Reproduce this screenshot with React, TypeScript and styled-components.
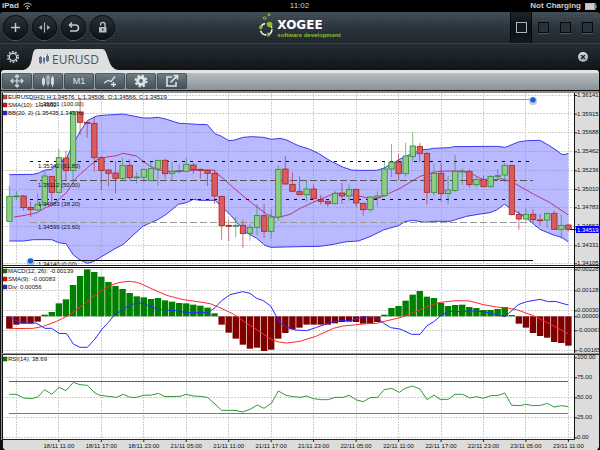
import React from "react";
import styled, { createGlobalStyle, css } from "styled-components";

const GlobalStyle = createGlobalStyle`
  * { box-sizing: border-box; }
  html, body { margin: 0; background: #000; }
  body { font-family: "Liberation Sans", Arial, sans-serif; }
  button { font: inherit; color: inherit; border: 0; padding: 0; margin: 0; background: none; cursor: pointer; }
  svg { display: block; }
`;

const Screen = styled.main`
  width: 100%;
  background: #000;
`;

const StatusBar = styled.div`
  display: grid;
  grid-template-columns: 1fr auto 1fr;
  align-items: center;
  height: 12px;
  padding: 0 3px 0 2px;
  background: #000;
  color: #cfcfcf;
  font-size: 8px;
  line-height: 12px;
  font-weight: 700;
`;

const StatusGroup = styled.div<{ $end?: boolean }>`
  display: flex;
  align-items: center;
  gap: 4px;
  justify-content: ${(p) => (p.$end ? "flex-end" : "flex-start")};
`;

const Clock = styled.time`
  font-weight: 400;
`;

const weave = css`
  background-image:
    repeating-linear-gradient(90deg, rgba(255, 255, 255, 0.02) 0 1px, transparent 1px 3px),
    repeating-linear-gradient(0deg, rgba(0, 0, 0, 0.06) 0 1px, transparent 1px 3px),
    var(--shade);
`;

const Header = styled.header`
  --shade: linear-gradient(#42505a, #2a343c 50%, #20282f);
  ${weave}
  display: grid;
  grid-template-columns: 1fr auto 1fr;
  height: 31px;
  border-radius: 3px 3px 0 0;
`;

const Actions = styled.nav`
  display: flex;
  align-items: center;
  gap: 4px;
  padding-left: 3px;
`;

const RoundButton = styled.button`
  display: grid;
  place-items: center;
  width: 25px;
  height: 25px;
  border-radius: 50%;
  background: linear-gradient(#2b343a, #0c1013);
  box-shadow: 0 0 0 1px #0d1215 inset, 0 1px 0 #4a565e;
`;

const Brand = styled.div`
  display: flex;
  align-items: flex-start;
  gap: 3px;
  padding-top: 1px;
`;

const BrandText = styled.div`
  padding-top: 5px;
`;

const BrandName = styled.div`
  font-family: "DejaVu Sans", sans-serif;
  font-size: 12px;
  line-height: 14px;
  font-weight: 700;
  color: #fff;
`;

const BrandLine = styled.div`
  font-size: 6px;
  line-height: 6px;
  font-weight: 700;
  color: #8fbf21;
`;

const Layouts = styled.nav`
  display: flex;
  justify-content: flex-end;
  padding-right: 2px;
`;

const LayoutButton = styled.button<{ $on?: boolean }>`
  display: grid;
  place-items: center;
  width: 22px;
  height: 31px;
  ${(p) =>
    p.$on &&
    css`
      background: linear-gradient(#1d252b, #0c1013 50%, #14191d);
      border: solid #07090b;
      border-width: 0 1px;
    `}
`;

const LayoutBox = styled.span<{ $on?: boolean }>`
  width: 11px;
  height: 11px;
  border: ${(p) => (p.$on ? "1px solid #a9b7bf" : "1px solid #07090b")};
  background: ${(p) => (p.$on ? "#12171a" : "#28323a")};
  box-shadow: ${(p) => (p.$on ? "none" : "0 1px 0 #4d5860")};
`;

const TabRow = styled.div`
  --shade: linear-gradient(#262e34, #0f1316);
  ${weave}
  display: flex;
  align-items: flex-end;
  height: 27px;
  border-top: 1px solid #36424a;
`;

const SettingsButton = styled.button`
  align-self: center;
  margin-left: 6px;
  width: 14px;
  height: 14px;
`;

const Tab = styled.button`
  display: flex;
  height: 21px;
  margin-left: 3px;
`;

const TabFace = styled.span`
  display: flex;
  align-items: center;
  gap: 3px;
  height: 21px;
  padding: 0 3px 0 2px;
  background: #dedfe0;
  color: #4a545c;
  font-family: "Open Sans", sans-serif;
  font-size: 12px;
  line-height: 20px;
`;

const CloseButton = styled.button`
  display: grid;
  place-items: center;
  align-self: center;
  margin: 0 12px 0 auto;
  width: 10px;
  height: 10px;
  border-radius: 50%;
  background: linear-gradient(#e2e6ea, #9aa5ae);
`;

const Toolbar = styled.div`
  display: flex;
  gap: 1px;
  height: 20px;
  margin: 0 1px;
  padding: 0 1px 1px;
  border-top: 3px solid #e4e5e6;
  border-radius: 3px 3px 0 0;
  background: linear-gradient(#babfc2, #86919a);
`;

const Tool = styled.button`
  display: grid;
  place-items: center;
  flex: 0 0 30px;
  height: 16px;
  border: 1px solid #414d55;
  border-top-color: #55616a;
  border-radius: 2px;
  background: linear-gradient(#6f7c84, #465159);
  color: #dfe3e6;
  font-size: 9px;
  line-height: 14px;
`;

const ChartSvg = styled.svg`
  width: 100%;
  height: auto;
`;

const ChartText = styled.text<{ $light?: boolean }>`
  font-family: "Liberation Sans", Arial, sans-serif;
  font-size: 6px;
  fill: ${(p) => (p.$light ? "#fff" : "#111")};
`;

/* ---------- chart data: vertical samples are stored in thirds of a unit ---------- */

type Point = [number, number];
const t = (v: number) => v / 3;
const slotX = (i: number) => t(28 + i * 21.23);
const line = (pts: Point[]) => pts.map(([x, y]) => `${t(x).toFixed(2)},${t(y).toFixed(2)}`).join(" ");

const PLOT_LEFT = 3;
const PLOT_RIGHT = 574;

// direction, body top, body bottom, wick top, wick bottom
const candles: ["g" | "r", number, number, number, number][] = [
  ["g", 319, 394, 288, 394], ["g", 318, 320, 303, 330], ["r", 318, 353, 315, 362], ["r", 352, 359, 334, 381],
  ["g", 343, 360, 310, 365], ["g", 258, 343, 245, 347], ["r", 259, 307, 258, 333], ["g", 203, 307, 177, 308],
  ["r", 204, 242, 182, 270], ["g", 66, 241, 62, 270], ["r", 67, 97, 25, 135], ["r", 97, 100, 96, 143],
  ["r", 100, 203, 80, 245], ["r", 203, 242, 198, 300], ["r", 240, 250, 238, 289], ["r", 249, 265, 213, 311],
  ["g", 226, 265, 203, 270], ["r", 226, 263, 207, 270], ["g", 261, 263, 246, 280], ["g", 238, 262, 236, 277],
  ["g", 236, 272, 216, 272], ["g", 211, 237, 210, 287], ["r", 211, 251, 207, 266], ["g", 244, 250, 215, 269],
  ["g", 243, 245, 225, 250], ["g", 223, 244, 203, 245], ["r", 225, 239, 219, 251], ["r", 238, 241, 236, 266],
  ["r", 241, 250, 238, 288], ["r", 250, 318, 238, 342], ["r", 319, 407, 318, 449], ["r", 406, 409, 390, 453],
  ["g", 406, 409, 381, 441], ["r", 406, 431, 390, 473], ["g", 412, 430, 404, 452], ["g", 376, 412, 342, 435],
  ["r", 377, 424, 342, 444], ["g", 381, 424, 357, 447], ["g", 238, 381, 226, 392], ["r", 237, 282, 198, 284],
  ["r", 283, 304, 246, 304], ["r", 305, 314, 259, 314], ["g", 297, 314, 270, 335], ["r", 297, 326, 283, 331],
  ["r", 329, 334, 315, 343], ["r", 334, 341, 332, 350], ["g", 310, 341, 301, 343], ["r", 309, 318, 279, 342],
  ["g", 298, 318, 283, 333], ["r", 298, 339, 297, 351], ["r", 340, 359, 338, 377], ["g", 321, 359, 319, 367],
  ["g", 318, 322, 305, 350], ["g", 237, 317, 215, 321], ["g", 216, 237, 162, 262], ["r", 216, 251, 192, 270],
  ["g", 198, 251, 158, 260], ["g", 168, 200, 126, 215], ["r", 169, 191, 159, 216], ["r", 190, 307, 185, 344],
  ["g", 250, 307, 220, 315], ["r", 250, 311, 220, 334], ["g", 300, 311, 258, 343], ["g", 244, 301, 195, 305],
  ["g", 243, 246, 235, 285], ["r", 244, 284, 238, 292], ["g", 268, 284, 262, 291], ["r", 268, 290, 257, 292],
  ["g", 259, 290, 257, 293], ["g", 257, 260, 237, 273], ["g", 226, 255, 220, 277], ["r", 226, 374, 225, 377],
  ["r", 373, 387, 363, 419], ["g", 373, 387, 355, 395], ["r", 373, 389, 357, 400], ["r", 390, 392, 372, 407],
  ["g", 370, 390, 368, 413], ["r", 370, 418, 362, 419], ["g", 406, 418, 374, 447], ["r", 405, 418, 402, 424],
];

const upperBand: Point[] = [
  [28, 254], [100, 253], [118, 248], [135, 240], [155, 238], [176, 215], [200, 205], [215, 170], [240, 125],
  [262, 92], [290, 78], [320, 75], [345, 74], [368, 72], [400, 78], [430, 84], [450, 84], [475, 82], [500, 88],
  [537, 100], [560, 101], [590, 103], [622, 104], [645, 131], [665, 139], [686, 152], [700, 151], [730, 142],
  [755, 140], [790, 142], [815, 148], [840, 145], [860, 150], [880, 160], [900, 169], [925, 176], [955, 190],
  [990, 212], [1030, 232], [1055, 240], [1070, 241], [1130, 241], [1150, 235], [1175, 222], [1200, 207],
  [1220, 198], [1250, 185], [1262, 179], [1285, 178], [1300, 175], [1350, 173], [1360, 170], [1490, 169],
  [1516, 172], [1555, 156], [1580, 152], [1620, 151], [1645, 165], [1665, 178], [1685, 193], [1694, 194], [1705, 190],
];

const lowerBand: Point[] = [
  [28, 453], [70, 453], [100, 449], [155, 449], [176, 458], [198, 461], [220, 495], [240, 510], [262, 520],
  [280, 515], [305, 500], [345, 476], [370, 463], [400, 435], [430, 408], [450, 399], [475, 388], [500, 372],
  [535, 343], [560, 338], [580, 328], [600, 331], [645, 331], [670, 355], [690, 373], [710, 397], [740, 428],
  [770, 445], [795, 466], [812, 472], [900, 470], [960, 469], [1000, 463], [1040, 455], [1075, 453], [1110, 440],
  [1150, 420], [1195, 407], [1215, 395], [1238, 391], [1275, 397], [1300, 394], [1350, 394], [1400, 379],
  [1440, 372], [1470, 368], [1490, 360], [1513, 343], [1550, 366], [1580, 385], [1620, 418], [1660, 435],
  [1685, 442], [1705, 456],
];

const priceAverage: Point[] = [
  [42, 381], [75, 376], [112, 368], [132, 355], [155, 346], [180, 325], [200, 307], [230, 262], [260, 235],
  [290, 210], [320, 201], [350, 197], [368, 190], [410, 198], [430, 215], [450, 228], [470, 238], [500, 245],
  [540, 243], [560, 241], [640, 240], [680, 275], [720, 310], [760, 343], [800, 372], [820, 381], [840, 381],
  [870, 373], [900, 355], [950, 332], [985, 318], [1005, 309], [1070, 317], [1110, 325], [1135, 325], [1165, 311],
  [1200, 295], [1260, 259], [1300, 247], [1320, 244], [1360, 243], [1390, 244], [1420, 254], [1455, 272],
  [1475, 270], [1505, 266], [1540, 278], [1600, 312], [1650, 338], [1705, 375],
];

const macdBars = [
  194, 182, 179, 179, 173, 152, 144, 118, 106, 63, 36, 16, 24, 38, 54, 66, 75, 87, 97, 100, 105, 102, 109, 113,
  117, 118, 122, 125, 131, 148, 182, 206, 224, 242, 254, 251, 261, 257, 224, 207, 196, 191, 182, 182, 182, 182,
  178, 174, 173, 174, 179, 178, 174, 152, 132, 126, 110, 92, 81, 98, 102, 117, 126, 123, 122, 129, 132, 138,
  138, 135, 129, 153, 179, 191, 207, 216, 221, 234, 237, 245,
];
const MACD_ZERO = 157;

const macdAverage: Point[] = [
  [28, 194], [100, 193], [130, 187], [170, 172], [210, 152], [260, 114], [300, 82], [335, 63], [360, 55], [385, 52],
  [405, 54], [420, 58], [450, 72], [500, 94], [550, 107], [600, 114], [630, 119], [660, 131], [700, 150], [740, 178],
  [775, 200], [810, 224], [835, 234], [860, 237], [900, 232], [950, 216], [1000, 193], [1030, 186], [1100, 179],
  [1130, 178], [1170, 168], [1200, 161], [1240, 146], [1280, 128], [1320, 115], [1370, 110], [1410, 111],
  [1450, 122], [1490, 129], [1520, 132], [1550, 137], [1600, 155], [1650, 180], [1704, 209],
];

const macdDivergence: Point[] = [
  [28, 158], [45, 169], [65, 177], [108, 177], [135, 193], [155, 193], [177, 208], [200, 209], [220, 240],
  [240, 250], [262, 250], [285, 225], [305, 197], [325, 175], [345, 151], [368, 138], [388, 124], [410, 117],
  [430, 118], [450, 127], [475, 136], [530, 140], [560, 146], [600, 146], [625, 146], [645, 131], [665, 110],
  [690, 92], [728, 83], [750, 88], [770, 103], [790, 110], [812, 126], [825, 150], [840, 175], [860, 189],
  [885, 198], [920, 200], [950, 190], [990, 176], [1030, 169], [1050, 171], [1090, 158], [1130, 162], [1150, 177],
  [1172, 191], [1200, 195], [1235, 211], [1260, 211], [1280, 186], [1300, 174], [1325, 153], [1345, 142],
  [1390, 143], [1410, 140], [1450, 143], [1485, 151], [1515, 158], [1535, 140], [1555, 122], [1580, 113],
  [1620, 106], [1645, 113], [1665, 112], [1705, 123],
];

const rsi: Point[] = [
  [28, 391], [50, 391], [70, 402], [95, 404], [113, 399], [134, 377], [155, 391], [177, 370], [198, 380],
  [220, 355], [240, 362], [262, 364], [285, 387], [300, 394], [350, 400], [370, 391], [390, 400], [410, 400],
  [430, 394], [455, 393], [475, 388], [495, 398], [540, 397], [558, 391], [580, 396], [600, 397], [622, 400],
  [645, 420], [665, 439], [705, 439], [728, 444], [750, 436], [772, 423], [792, 433], [815, 417], [835, 381],
  [858, 394], [880, 398], [900, 400], [920, 396], [940, 404], [965, 407], [985, 407], [1005, 400], [1030, 400],
  [1047, 394], [1070, 408], [1090, 413], [1110, 401], [1133, 400], [1152, 377], [1175, 373], [1198, 385],
  [1215, 373], [1238, 366], [1260, 375], [1281, 407], [1302, 393], [1320, 406], [1345, 406], [1365, 391],
  [1388, 391], [1410, 402], [1430, 398], [1450, 403], [1472, 395], [1495, 394], [1514, 387], [1535, 424],
  [1560, 425], [1577, 421], [1600, 425], [1622, 424], [1642, 418], [1662, 429], [1685, 425], [1705, 428],
];

type Level = [number, string];
const priceLevels: Level[] = [
  [15, "1.36141"], [71, "1.35915"], [127, "1.35688"], [184, "1.35462"], [241, "1.35236"],
  [297, "1.35010"], [352, "1.34783"], [409, "1.34557"], [466, "1.34331"], [520, "1.34105"],
];
const macdLevels: Level[] = [
  [16, "0.00226"], [79, "0.00128"], [139, "0.00030"], [157, "0.00000"], [199, "-0.00067"], [259, "-0.00165"],
];
const rsiLevels: Level[] = [[280, "100.00"], [340, "75.00"], [400, "50.00"], [460, "25.00"], [520, "0.00"]];

const fibs = [
  { y: 28, label: "1.35801 (100.00)", stroke: "#999", dash: undefined, text: 48 },
  { y: 214, label: "1.35342 (61.80)", stroke: "#000", dash: "3 5", text: 233 },
  { y: 271, label: "1.35112 (50.00)", stroke: "#555", dash: "7 3", text: 290 },
  { y: 328, label: "1.34883 (38.20)", stroke: "#000", dash: "3 5", text: 347 },
  { y: 398, label: "1.34599 (23.60)", stroke: "#999", dash: "7 3", text: 417 },
  { y: 511, label: "1.34140 (0.00)", stroke: "#000", dash: undefined, text: 527 },
];

const times = [
  "18/11 11:00", "18/11 17:00", "18/11 23:00", "21/11 05:00", "21/11 11:00", "21/11 17:00", "21/11 23:00",
  "22/11 05:00", "22/11 11:00", "22/11 17:00", "22/11 23:00", "23/11 05:00", "23/11 11:00",
];

/* ---------- chart parts ---------- */

function Frame({ top, height }: { top: number; height: number }) {
  return (
    <g shapeRendering="crispEdges">
      <rect x="0" y={top} width="600" height={height} fill="#111" />
      <rect x="1" y={top} width="1" height={height} fill="#8d959b" />
      <rect x={PLOT_LEFT} y={top} width={PLOT_RIGHT - PLOT_LEFT} height={height} fill="#fff" />
      <rect x={PLOT_RIGHT + 1} y={top} width="24" height={height} fill="#dcdcdc" />
    </g>
  );
}

function Grid({ levels, top, bottom }: { levels: Level[]; top: number; bottom: number }) {
  return (
    <g stroke="#cfcfcf" strokeWidth="1" strokeDasharray="2 1" shapeRendering="crispEdges">
      {levels.map(([v]) => (
        <line key={v} x1={PLOT_LEFT} x2={PLOT_RIGHT} y1={t(v)} y2={t(v)} />
      ))}
      {Array.from({ length: 14 }, (_, k) => slotX(1 + k * 6)).map((x) => (
        <line key={x} x1={x} x2={x} y1={top} y2={bottom} />
      ))}
    </g>
  );
}

function Scale({ levels }: { levels: Level[] }) {
  return (
    <>
      {levels.map(([v, label]) => (
        <React.Fragment key={label}>
          <rect x="575" y={t(v)} width="2" height="1" fill="#222" />
          <ChartText x="577" y={t(v) + 2}>{label}</ChartText>
        </React.Fragment>
      ))}
    </>
  );
}

function Key({ rows, top }: { rows: [string, string][]; top: number }) {
  return (
    <>
      {rows.map(([color, label], i) => (
        <React.Fragment key={label}>
          <rect x="3" y={top + i * 8 - 4} width="4" height="4" fill={color} stroke="#222" strokeWidth="0.4" />
          <ChartText x="8" y={top + i * 8}>{label}</ChartText>
        </React.Fragment>
      ))}
    </>
  );
}

function Handle({ x, y }: { x: number; y: number }) {
  return (
    <g>
      <circle cx={x} cy={y + 1} r="4" fill="#777" opacity="0.45" />
      <circle cx={x} cy={y} r="3.4" fill="#d9e4f2" />
      <circle cx={x} cy={y} r="2.8" fill="#1265d8" />
    </g>
  );
}

function PriceChart() {
  const area = `${line(upperBand)} ${line([...lowerBand].reverse())}`;
  return (
    <ChartSvg viewBox="0 0 600 176" role="img" aria-label="EURUSD hourly candlestick chart">
      <Frame top={0} height={176} />
      <rect x="1" y="0" width="598" height="1" fill="#111" />
      <rect x="2" y="1" width="597" height="2" fill="#8c8c8c" />
      <Grid levels={priceLevels} top={3} bottom={174} />
      <polygon points={area} fill="#8080ff" fillOpacity="0.55" />
      <polyline points={line(upperBand)} fill="none" stroke="#3a3aee" />
      <polyline points={line(lowerBand)} fill="none" stroke="#3a3aee" />
      <polyline points={line(priceAverage)} fill="none" stroke="#b8387f" />
      <g shapeRendering="crispEdges">
        {fibs.map((f) => (
          <line key={f.y} x1="30" x2="533" y1={t(f.y)} y2={t(f.y)} stroke={f.stroke} strokeDasharray={f.dash} />
        ))}
      </g>
      {candles.map(([dir, top, bottom, high, low], i) => {
        const x = slotX(i);
        const edge = dir === "g" ? "#2c8c35" : "#a52520";
        return (
          <g key={i} stroke={edge}>
            <line x1={x} x2={x} y1={t(high)} y2={t(low)} strokeOpacity="0.6" />
            <rect
              x={x - 2.6}
              y={t(top)}
              width="5.4"
              height={Math.max(t(bottom - top), 0.5)}
              fill={dir === "g" ? "#90cc84" : "#d85c5c"}
              strokeWidth="0.8"
            />
          </g>
        );
      })}
      {fibs.map((f) => (
        <ChartText key={f.y} x="38" y={t(f.text)}>{f.label}</ChartText>
      ))}
      <Key
        top={9}
        rows={[
          ["#b5524a", "EURUSD(H1) H:1.34576, L:1.34506, O:1.34566, C:1.34519"],
          ["#f00", "SMA(10): 1.34692"],
          ["#22f", "BB(20, 2) (1.35435,1.34376)"],
        ]}
      />
      <Handle x={30.5} y={171} />
      <Handle x={533} y={10} />
      <Scale levels={priceLevels} />
      <rect x="570" y="139" width="6" height="1" fill="#00f" />
      <rect x="576" y="136" width="23" height="7" fill="#00f" />
      <ChartText $light x="577" y="142">1.34519</ChartText>
      <rect x="2" y="175" width="597" height="1" fill="#222" />
    </ChartSvg>
  );
}

function MacdChart() {
  return (
    <ChartSvg viewBox="0 2 600 88" role="img" aria-label="MACD indicator">
      <Frame top={2} height={88} />
      <rect x="2" y="3" width="597" height="1" fill="#000" />
      <Grid levels={macdLevels} top={4} bottom={89} />
      {macdBars.map((v, i) => {
        const up = v < MACD_ZERO;
        return (
          <rect
            key={i}
            x={slotX(i) - 3.2}
            y={t(Math.min(v, MACD_ZERO))}
            width="6.4"
            height={t(Math.abs(v - MACD_ZERO))}
            fill={up ? "#008000" : "#800000"}
          />
        );
      })}
      <polyline points={line(macdAverage)} fill="none" stroke="#ff2a2a" />
      <polyline points={line(macdDivergence)} fill="none" stroke="#2a2aff" />
      <Key top={9} rows={[["#080", "MACD(12, 26): -0.00139"], ["#f00", "SMA(9): -0.00083"], ["#22f", "Div: 0.00056"]]} />
      <Scale levels={macdLevels} />
      <rect x="2" y="89" width="597" height="1" fill="#999" />
    </ChartSvg>
  );
}

function RsiChart() {
  return (
    <ChartSvg viewBox="0 90 600 86" role="img" aria-label="RSI indicator">
      <Frame top={90} height={86} />
      <rect x="2" y="90" width="597" height="1" fill="#333" />
      <Grid levels={rsiLevels} top={91} bottom={175} />
      <g shapeRendering="crispEdges">
        <line x1={slotX(0)} x2={slotX(79)} y1="117.5" y2="117.5" stroke="#4a4aff" />
        <line x1={slotX(0)} x2={slotX(79)} y1="149.5" y2="149.5" stroke="#ff4040" />
      </g>
      <polyline points={line(rsi)} fill="none" stroke="#2f9a35" />
      <Key top={97} rows={[["#080", "RSI(14): 38.69"]]} />
      <Scale levels={rsiLevels} />
      <rect x="2" y="175" width="573" height="1" fill="#222" />
    </ChartSvg>
  );
}

function TimeAxis() {
  return (
    <ChartSvg viewBox="0 176 600 10" role="img" aria-label="Time axis">
      <rect x="0" y="176" width="600" height="10" fill="#111" />
      <path d="M3 176H599V183L597 186H5L3 184Z" fill="#dcdcdc" />
      {times.map((label, i) => (
        <React.Fragment key={label}>
          <rect x={slotX(7 + i * 6) - 0.5} y="176" width="1" height="2" fill="#222" />
          <ChartText x={slotX(7 + i * 6)} y="184" textAnchor="middle">{label}</ChartText>
        </React.Fragment>
      ))}
    </ChartSvg>
  );
}

/* ---------- icons ---------- */

const ink = { fill: "none", stroke: "#c3cacf", strokeWidth: 1.5 } as const;

const PlusIcon = () => (
  <svg width="13" height="13" viewBox="0 0 13 13" {...ink}><path d="M6.5 2V11M2 6.5H11" /></svg>
);
const SplitIcon = () => (
  <svg width="13" height="13" viewBox="0 0 13 13" fill="#aab3b9">
    <path d="M5.9 1.5H7.1V11.5H5.9ZM4 4V9L.8 6.5ZM9 4V9L12.2 6.5Z" />
  </svg>
);
const UndoIcon = () => (
  <svg width="13" height="13" viewBox="0 0 13 13" {...ink}><path d="M5 1.5L2.5 4L5 6.5M2.5 4H8.5A3 3 0 0 1 8.5 10H3" /></svg>
);
const LockIcon = () => (
  <svg width="13" height="13" viewBox="0 0 13 13">
    <path d="M4.6 4.6V3.6A2.2 2.2 0 0 1 9 3.6V6.5" {...ink} strokeWidth="1.3" />
    <rect x="3" y="6" width="7.5" height="5.5" rx=".5" fill="#b4bcc2" />
    <rect x="6.2" y="7.5" width="1.2" height="2.2" fill="#1b2226" />
  </svg>
);
const GearOutline = () => (
  <svg width="14" height="14" viewBox="0 0 14 14" fill="none" stroke="#c8cfd4">
    <circle cx="7" cy="7" r="3.7" strokeWidth="1.4" />
    <circle cx="7" cy="7" r="5.2" strokeWidth="1.6" strokeDasharray="1.7 1.567" />
  </svg>
);
const GearSolid = () => (
  <svg width="14" height="14" viewBox="0 0 14 14" fill="none" stroke="#dfe3e6">
    <circle cx="7" cy="7" r="3.4" strokeWidth="3" />
    <circle cx="7" cy="7" r="5.5" strokeWidth="2" strokeDasharray="2.3 2.02" />
  </svg>
);
const MoveIcon = () => (
  <svg width="14" height="14" viewBox="0 0 14 14" fill="none" stroke="#dfe3e6" strokeWidth="1.1">
    <path d="M7 1V13M1 7H13M5 3L7 1L9 3M5 11L7 13L9 11M3 5L1 7L3 9M11 5L13 7L11 9" />
  </svg>
);
const CandleIcon = () => (
  <svg width="14" height="14" viewBox="0 0 14 14" fill="#d4d9dc" stroke="#d4d9dc">
    <path d="M2.5 3V12M7 1V12M11.5 2V13" />
    <rect x="1.5" y="5" width="2" height="5" /><rect x="6" y="3" width="2" height="6" fill="#66727a" />
    <rect x="10.5" y="4" width="2" height="6" />
  </svg>
);
const TrendIcon = () => (
  <svg width="14" height="14" viewBox="0 0 14 14" fill="none" stroke="#dfe3e6" strokeWidth="1.3">
    <path d="M1 9L5 6.5L8 7.5L12 2.5M10.5 8V13M8 10.5H13" />
  </svg>
);
const ShareIcon = () => (
  <svg width="14" height="14" viewBox="0 0 14 14" fill="none" stroke="#dfe3e6" strokeWidth="1.6">
    <path d="M7 3H2V12H11V8M5.5 8.5L12 2M8.5 1.5H12.5V5.5" />
  </svg>
);
const TabCandles = () => (
  <svg width="10" height="21" viewBox="0 0 10 21" fill="#5d7187">
    <path d="M0 8H3V14H0ZM1 7H2V15H1ZM4 9H6V13H4ZM4.5 8H5.5V15H4.5ZM7 7H10V12H7ZM8 5H9V13H8Z" />
  </svg>
);
const LeftCap = () => (
  <svg width="14" height="21" viewBox="0 0 14 21"><path d="M0 21C6 20 8 15 9 9C10 3 11 0 14 0V21Z" fill="#dedfe0" /></svg>
);
const RightCap = () => (
  <svg width="16" height="21" viewBox="0 0 16 21"><path d="M16 21C10 20 8 15 6 9C4 3 3 0 0 0V21Z" fill="#dedfe0" /></svg>
);
const WifiIcon = () => (
  <svg width="9" height="8" viewBox="0 0 9 8" fill="none" stroke="#cfcfcf">
    <path d="M.5 3Q4.5-.8 8.5 3M2.2 4.7Q4.5 2.7 6.8 4.7" /><circle cx="4.5" cy="6.3" r=".6" fill="#cfcfcf" />
  </svg>
);
const BatteryIcon = () => (
  <svg width="12" height="7" viewBox="0 0 12 7"><rect x=".5" y=".5" width="9.5" height="6" fill="none" stroke="#bbb" /><rect x="1" y="1" width="8.5" height="5" fill="#ccc" /><rect x="10.5" y="2" width="1" height="3" fill="#bbb" /></svg>
);
const CloseIcon = () => (
  <svg width="6" height="6" viewBox="0 0 6 6" stroke="#20282e" strokeWidth="1.5"><path d="M1 1L5 5M5 1L1 5" /></svg>
);
const BrandMark = () => (
  <svg width="15" height="25" viewBox="0 0 15 25" fill="none">
    <circle cx="7.2" cy="16.2" r="5.7" stroke="#f2f2f2" strokeWidth="1.6" strokeDasharray="7 1.95" />
    <circle cx="10.7" cy="11.5" r="2.7" fill="#8fbf21" />
    <circle cx="1.8" cy="14.3" r="1.8" fill="#8fbf21" />
    <circle cx="9.2" cy="21.6" r="1.6" stroke="#8fbf21" />
    <circle cx="5.7" cy="5" r="1.3" stroke="#8fbf21" />
    <circle cx="10" cy="1.8" r="1.3" fill="#8fbf21" />
  </svg>
);

export default function App() {
  return (
    <Screen>
      <GlobalStyle />
      <StatusBar>
        <StatusGroup><span>iPad</span><WifiIcon /></StatusGroup>
        <Clock>11:02</Clock>
        <StatusGroup $end><span>Not Charging</span><BatteryIcon /></StatusGroup>
      </StatusBar>
      <Header>
        <Actions aria-label="Chart actions">
          <RoundButton aria-label="Add chart"><PlusIcon /></RoundButton>
          <RoundButton aria-label="Split"><SplitIcon /></RoundButton>
          <RoundButton aria-label="Undo"><UndoIcon /></RoundButton>
          <RoundButton aria-label="Unlock"><LockIcon /></RoundButton>
        </Actions>
        <Brand>
          <BrandMark />
          <BrandText>
            <BrandName>XOGEE</BrandName>
            <BrandLine>software development</BrandLine>
          </BrandText>
        </Brand>
        <Layouts aria-label="Workspaces">
          {[1, 2, 3, 4].map((n) => (
            <LayoutButton key={n} $on={n === 1} aria-label={`Workspace ${n}`}><LayoutBox $on={n === 1} /></LayoutButton>
          ))}
        </Layouts>
      </Header>
      <TabRow>
        <SettingsButton aria-label="Settings"><GearOutline /></SettingsButton>
        <Tab>
          <LeftCap />
          <TabFace><TabCandles />EURUSD</TabFace>
          <RightCap />
        </Tab>
        <CloseButton aria-label="Close chart"><CloseIcon /></CloseButton>
      </TabRow>
      <Toolbar>
        <Tool aria-label="Crosshair"><MoveIcon /></Tool>
        <Tool aria-label="Chart type"><CandleIcon /></Tool>
        <Tool>M1</Tool>
        <Tool aria-label="Add indicator"><TrendIcon /></Tool>
        <Tool aria-label="Chart settings"><GearSolid /></Tool>
        <Tool aria-label="Share"><ShareIcon /></Tool>
      </Toolbar>
      <PriceChart />
      <MacdChart />
      <RsiChart />
      <TimeAxis />
    </Screen>
  );
}
